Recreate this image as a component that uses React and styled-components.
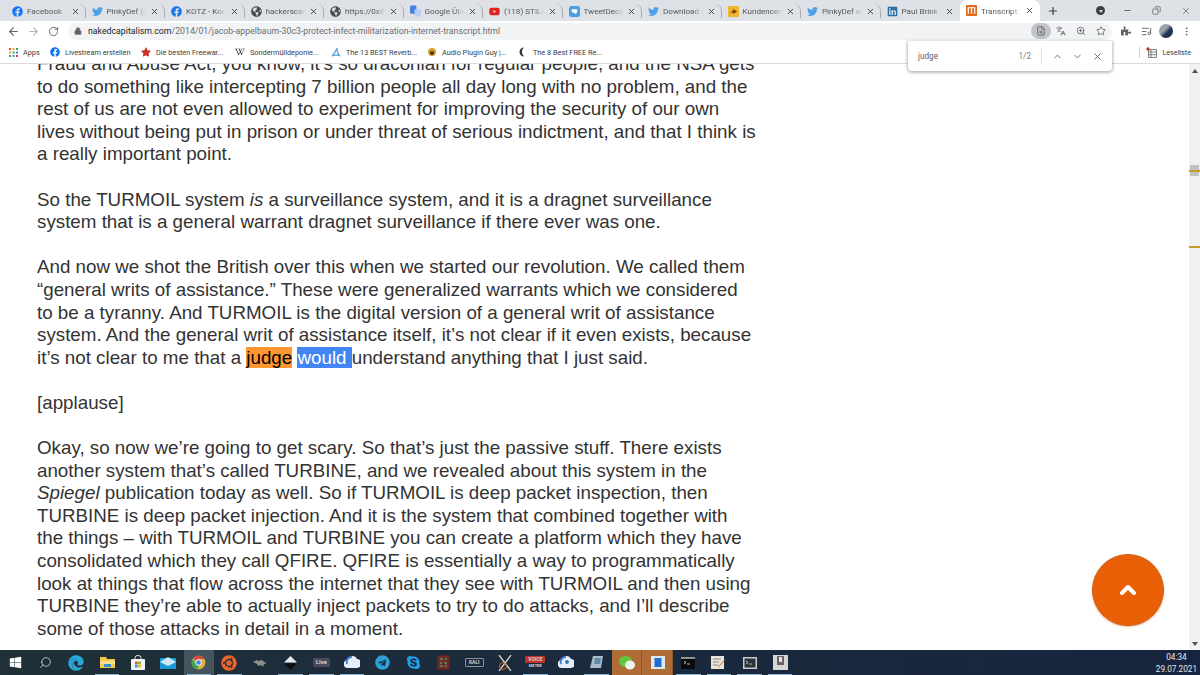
import React from "react";
import styled, { createGlobalStyle } from "styled-components";
import { FaFacebook, FaTwitter, FaLinkedin, FaYoutube, FaWindows, FaUbuntu, FaTelegram, FaSkype, FaEdge, FaGlobeAmericas, FaStar, FaPuzzlePiece, FaWikipediaW } from "react-icons/fa";
import { ArrowLeft, ArrowRight, RotateCw, Lock, Search, ZoomIn, Star, X, Plus, Minus, ChevronUp, ChevronDown, ListMusic, EllipsisVertical, Copy, FileSearch, Languages } from "lucide-react";

const GlobalStyle = createGlobalStyle`
  html, body { margin: 0; padding: 0; }
  body { width: 1200px; height: 675px; overflow: hidden; background: #fff; font-family: Roboto, "Liberation Sans", sans-serif; }
`;

const Screen = styled.div`
  position: relative;
  display: flex;
  flex-direction: column;
  width: 1200px;
  height: 675px;
  overflow: hidden;
`;

const TabStrip = styled.div`
  display: flex;
  align-items: flex-end;
  height: 21px;
  padding-left: 6px;
  background: #dee1e6;
  color: #45484d;
`;

const Tab = styled.div`
  display: flex;
  align-items: center;
  box-sizing: border-box;
  width: 79.5px;
  height: ${(p) => (p.$active ? "21px" : "14px")};
  padding-left: 6px;
  background: ${(p) => (p.$active ? "#fff" : "transparent")};
  border-radius: 7px 7px 0 0;
  margin-bottom: ${(p) => (p.$active ? "0" : "3px")};
  border-right: 1px solid ${(p) => (p.$sep ? "#a9acb1" : "transparent")};
`;

const Favicon = styled.span`
  display: flex;
  align-items: center;
  justify-content: center;
  flex: none;
  width: 11px;
  height: 11px;
  margin-right: 4px;
  font-size: 11px;
  color: ${(p) => p.$color || "#5f6368"};
`;

const TabTitle = styled.span`
  flex: 1;
  overflow: hidden;
  white-space: nowrap;
  font-size: 8.1px;
  color: #55585e;
  mask-image: linear-gradient(to right, #000 75%, transparent 100%);
`;

const TabClose = styled.span`
  display: flex;
  flex: none;
  width: 9px;
  margin: 0 5px 0 4px;
  color: #2c2e31;
`;

const NewTab = styled.span`
  display: flex;
  margin-left: 7px;
  margin-bottom: 4px;
  color: #3c4043;
`;

const WindowButtons = styled.div`
  display: flex;
  align-items: center;
  margin-left: auto;
  height: 21px;
  color: #3c4043;
`;

const WindowButton = styled.span`
  display: flex;
  justify-content: center;
  width: 29px;
`;

const ProfileDot = styled.span`
  display: flex;
  align-items: center;
  justify-content: center;
  width: 9px;
  height: 9px;
  margin-right: 8px;
  border-radius: 50%;
  background: #3c4043;
  &::after { content: ""; border: 2px solid transparent; border-top: 3px solid #dee1e6; margin-top: 3px; }
`;

const Toolbar = styled.div`
  display: flex;
  align-items: center;
  height: 20px;
  padding: 0 4px 0 3px;
  background: #fff;
  color: #5f6368;
`;

const NavButton = styled.span`
  display: flex;
  justify-content: center;
  flex: none;
  width: 20px;
  color: ${(p) => (p.$off ? "#b4b7bb" : "#5f6368")};
`;

const Omnibox = styled.div`
  display: flex;
  align-items: center;
  flex: none;
  box-sizing: border-box;
  width: 1044px;
  height: 17px;
  margin: 0 4px 0 5px;
  padding: 0 1px 0 6px;
  border-radius: 9px;
  background: #f1f3f4;
`;

const Url = styled.span`
  flex: 1;
  margin-left: 6px;
  font-size: 8.75px;
  white-space: nowrap;
  color: #6b6e73;
  & b { font-weight: 400; color: #25272a; }
`;

const OmniIcon = styled.span`
  display: flex;
  align-items: center;
  justify-content: center;
  flex: none;
  width: 20px;
  height: 16px;
  border-radius: 8px;
  background: ${(p) => (p.$on ? "#c2c4c7" : "transparent")};
  color: #5f6368;
`;

const ToolIcon = styled.span`
  display: flex;
  justify-content: center;
  flex: none;
  width: 20px;
  color: #5f6368;
`;

const Avatar = styled.span`
  display: block;
  width: 14px;
  height: 14px;
  border-radius: 50%;
  background: linear-gradient(135deg, #9aa3ad 0 40%, #20344f 60% 100%);
`;

const BookmarkBar = styled.div`
  display: flex;
  align-items: center;
  box-sizing: border-box;
  height: 23px;
  padding-left: 8px;
  background: #fff;
  border-bottom: 1px solid #dcdcdc;
`;

const Bookmark = styled.span`
  display: flex;
  align-items: center;
  gap: 5px;
  flex: none;
  width: ${(p) => p.$w}px;
  font-size: 7.3px;
  white-space: nowrap;
  color: #3c4043;
`;

const BookmarkIcon = styled.span`
  display: flex;
  align-items: center;
  justify-content: center;
  flex: none;
  width: 10px;
  height: 10px;
  font-size: 10px;
  color: ${(p) => p.$color || "#333"};
`;

const ReadingList = styled.span`
  display: flex;
  align-items: center;
  gap: 5px;
  margin-left: auto;
  padding-left: 6px;
  margin-right: 9px;
  font-size: 7.2px;
  color: #3c4043;
  border-left: 1px solid #d0d0d0;
`;

const FindBar = styled.div`
  position: absolute;
  top: 41px;
  left: 908px;
  display: flex;
  align-items: center;
  box-sizing: border-box;
  width: 204px;
  height: 30px;
  padding: 0 5px 0 10px;
  background: #fff;
  border-radius: 0 0 4px 4px;
  box-shadow: 0 1px 3px 1px rgba(60, 64, 67, 0.35);
  z-index: 3;
`;

const FindQuery = styled.span`
  flex: 1;
  font-size: 8.2px;
  color: #5a5d61;
`;

const FindCount = styled.span`
  font-size: 8.2px;
  color: #7b7e83;
  padding-right: 10px;
  margin-right: 5px;
  border-right: 1px solid #e0e0e0;
  line-height: 18px;
`;

const FindButton = styled.span`
  display: flex;
  justify-content: center;
  width: 20px;
  color: #5f6368;
`;

const Viewport = styled.div`
  display: flex;
  flex: 1;
  min-height: 0;
  overflow: hidden;
`;

const Page = styled.main`
  flex: 1;
  overflow: hidden;
  padding-left: 37px;
  background: #fff;
`;

const Article = styled.article`
  width: 720px;
  margin-top: -11px;
  font-family: "Liberation Sans", Arial, sans-serif;
  font-size: 18.77px;
  line-height: 22.6px;
  color: #333;
`;

const Para = styled.p`
  margin: 0 0 22.6px;
`;

const Hit = styled.span`
  background: ${(p) => (p.$current ? "#ff9632" : "#4285f4")};
  color: ${(p) => (p.$current ? "#000" : "#fff")};
`;

const Scrollbar = styled.aside`
  position: relative;
  flex: none;
  width: 11px;
  background: #f1f1f1;
  &::before {
    content: "";
    position: absolute;
    top: 5px;
    left: 3px;
    border: 3px solid transparent;
    border-top: 0;
    border-bottom: 4px solid #505050;
  }
  &::after {
    content: "";
    position: absolute;
    bottom: 4px;
    left: 3px;
    border: 3px solid transparent;
    border-bottom: 0;
    border-top: 4px solid #505050;
  }
`;

const ScrollThumb = styled.span`
  position: absolute;
  top: 101px;
  left: 1px;
  width: 9px;
  height: 11px;
  background: #c1c1c1;
`;

const ScrollMark = styled.span`
  position: absolute;
  top: ${(p) => p.$top}px;
  left: 0;
  width: 11px;
  height: 2px;
  background: #c89a2a;
`;

const TopButton = styled.button`
  position: absolute;
  left: 1092px;
  top: 554px;
  display: flex;
  align-items: center;
  justify-content: center;
  width: 72px;
  height: 72px;
  padding: 0;
  border: 1px solid #c9641e;
  border-radius: 50%;
  background: #e85f06;
  box-shadow: 0 1px 2px rgba(230, 100, 20, 0.5);
  color: #fff;
  z-index: 2;
`;

const Taskbar = styled.footer`
  display: flex;
  align-items: stretch;
  flex: none;
  height: 25px;
  background: linear-gradient(to right, #1f3038, #1c2b3c 40%, #17243f);
`;

const TaskItem = styled.span`
  position: relative;
  display: flex;
  align-items: center;
  justify-content: center;
  flex: none;
  width: 30.6px;
  background: ${(p) => (p.$bg === "active" ? "#45555f" : p.$bg === "alert" ? "#b06c35" : "transparent")};
  box-shadow: ${(p) => (p.$bg === "alert" ? "inset -1px 0 0 #8a5a2f" : "none")};
  &::after {
    content: "";
    display: ${(p) => (p.$open ? "block" : "none")};
    position: absolute;
    left: 3px;
    right: 3px;
    bottom: 0;
    height: 1px;
    background: #8fb4cf;
  }
`;

const TaskLabel = styled.span`
  display: block;
  padding: 1px 3px;
  border-radius: 1px;
  font-size: ${(p) => p.$size || 6}px;
  line-height: 1.1;
  font-weight: 600;
  text-align: center;
  color: #d9dde0;
  background: ${(p) => p.$bg || "transparent"};
  border: ${(p) => (p.$outline ? "1px solid #8a9298" : "none")};
`;

const Clock = styled.time`
  display: flex;
  flex-direction: column;
  align-items: center;
  justify-content: center;
  margin-left: auto;
  padding-right: 3px;
  font-size: 8.2px;
  line-height: 12px;
  color: #e6e8ea;
`;

const chromeLogo = (
  <svg width="15" height="15" viewBox="0 0 24 24">
    <circle cx="12" cy="12" r="11" fill="#e2b33a" />
    <path d="M12 1a11 11 0 0 1 9.500 5.500H12a5.500 5.500 0 0 0-5 3L3.600 4.800A11 11 0 0 1 12 1z" fill="#d9483b" />
    <path d="M2.900 6l5 8.700a5.500 5.500 0 0 0 5 2.800L9.800 22.800A11 11 0 0 1 2.900 6z" fill="#3aa757" />
    <circle cx="12" cy="12" r="4.500" fill="#4a86e8" stroke="#fff" strokeWidth="1.500" />
  </svg>
);

const tabs = [
  { title: "Facebook", icon: <FaFacebook />, color: "#1877f2" },
  { title: "PinkyDef (@PinkyDef)", icon: <FaTwitter />, color: "#4da1e8" },
  { title: "KOTZ - Kontakt", icon: <FaFacebook />, color: "#1877f2" },
  { title: "hackerscard", icon: <FaGlobeAmericas />, color: "#4a4d52" },
  { title: "https://0x8...", icon: <FaGlobeAmericas />, color: "#4a4d52" },
  {
    title: "Google Übersetzer",
    icon: (
      <svg width="12" height="12" viewBox="0 0 12 12">
        <rect x="0" y="0" width="7" height="9" rx="1" fill="#4a7fe0" />
        <rect x="5" y="4" width="7" height="8" rx="1" fill="#b9cdf2" />
      </svg>
    ),
  },
  { title: "(118) STILL AL", icon: <FaYoutube />, color: "#e0231b" },
  {
    title: "TweetDeck",
    icon: (
      <svg width="11" height="11" viewBox="0 0 12 12">
        <rect width="12" height="12" rx="2.500" fill="#4a9fe4" />
        <path d="M3 3.500h6v3.500l-3 2V7H3z" fill="#fff" />
      </svg>
    ),
  },
  { title: "Download a", icon: <FaTwitter />, color: "#4da1e8" },
  {
    title: "Kundencenter",
    icon: (
      <svg width="11" height="11" viewBox="0 0 12 12">
        <rect width="12" height="12" rx="1" fill="#efb52c" />
        <path d="M2 7l4-2-1-2 5 3-5 3 1-2z" fill="#6b3b12" />
      </svg>
    ),
  },
  { title: "PinkyDef on", icon: <FaTwitter />, color: "#4da1e8" },
  { title: "Paul Brink |", icon: <FaLinkedin />, color: "#2a6ea8" },
  {
    title: "Transcript: Jacob",
    active: true,
    icon: (
      <svg width="11" height="11" viewBox="0 0 12 12">
        <rect width="12" height="12" rx="1" fill="#dd6b1f" />
        <path d="M2.500 9.500V3h7v6.500M6 3v6.500" fill="none" stroke="#fff" strokeWidth="1.300" />
      </svg>
    ),
  },
];

const bookmarks = [
  {
    w: 42,
    label: "Apps",
    icon: (
      <svg width="9" height="9" viewBox="0 0 9 9">
        {[0, 3.5, 7].map((y, r) =>
          [0, 3.5, 7].map((x, c) => (
            <rect key={`${r}${c}`} x={x} y={y} width="2" height="2" fill={["#d9483b", "#e2a52c", "#3aa757", "#4a7fe0"][(r + c) % 4]} />
          ))
        )}
      </svg>
    ),
  },
  { w: 91, label: "Livestream erstellen", icon: <FaFacebook />, color: "#1877f2" },
  { w: 94, label: "Die besten Freewar...", icon: <FaStar />, color: "#c9322b" },
  { w: 96, label: "Sondermülldeponie...", icon: <FaWikipediaW />, color: "#222" },
  {
    w: 96,
    label: "The 13 BEST Reverb...",
    icon: (
      <svg width="10" height="10" viewBox="0 0 10 10">
        <path d="M1 9C3 7 5 4 6 1c0 3 1 6 3 8-2-1-5-1-8 0z" fill="none" stroke="#5aa7d8" strokeWidth="1.200" />
      </svg>
    ),
  },
  {
    w: 91,
    label: "Audio Plugin Guy |...",
    icon: (
      <svg width="10" height="10" viewBox="0 0 10 10">
        <circle cx="5" cy="5" r="4" fill="#d6a02a" />
        <circle cx="5" cy="6" r="2" fill="#4b3416" />
      </svg>
    ),
  },
  {
    w: 90,
    label: "The 8 Best FREE Re...",
    icon: (
      <svg width="10" height="10" viewBox="0 0 10 10">
        <path d="M6 0.500a4.500 4.500 0 0 0 0 9 6 6 0 0 1 0-9z" fill="#333" />
      </svg>
    ),
  },
];

const ReadingIcon = () => (
  <svg width="11" height="11" viewBox="0 0 11 11">
    <path d="M2.500 2.500h8v8h-8zM2.500 5h8M2.500 7.700h8M5 2.500v8" fill="none" stroke="#5f6368" strokeWidth="0.800" />
    <circle cx="2" cy="2" r="1.700" fill="#d93025" />
  </svg>
);

const Folder = () => (
  <svg width="15" height="13" viewBox="0 0 15 13">
    <path d="M0 1h6l1 2h8v9H0z" fill="#f2c94c" />
    <rect y="5" width="15" height="3" fill="#f8e08e" />
    <rect x="4" y="8" width="7" height="3" fill="#3b8bd0" />
  </svg>
);

const StoreBag = () => (
  <svg width="14" height="15" viewBox="0 0 14 15">
    <path d="M4 4V2.500a3 2 0 0 1 6 0V4" fill="none" stroke="#dfe3e6" />
    <rect y="4" width="14" height="11" rx="1" fill="#f3f4f5" />
    <rect x="4" y="6.500" width="2.800" height="2.800" fill="#e55b2c" />
    <rect x="7.200" y="6.500" width="2.800" height="2.800" fill="#7db93c" />
    <rect x="4" y="9.700" width="2.800" height="2.800" fill="#2f9fe0" />
    <rect x="7.200" y="9.700" width="2.800" height="2.800" fill="#f3b81f" />
  </svg>
);

const Mail = () => (
  <svg width="16" height="12" viewBox="0 0 16 12">
    <rect y="1" width="16" height="11" fill="#1b9ad6" />
    <path d="M0 5l8-5 8 5-8 4z" fill="#cfeaf7" />
  </svg>
);

const Ghost = () => (
  <svg width="14" height="8" viewBox="0 0 14 8">
    <path d="M0 3l4-2 1 1 4-1 2 2 3 1-3 1-1 3-2-2-3 1-1-2z" fill="#8d9088" />
  </svg>
);

const Diamond = () => (
  <svg width="13" height="14" viewBox="0 0 13 14">
    <path d="M6.500 0l6.500 6.500H0z" fill="#e8eaec" />
    <path d="M0 7.500h13L6.500 14z" fill="#0c0f12" />
  </svg>
);

const Cloud = ({ mark }) => (
  <svg width="16" height="15" viewBox="0 0 16 15">
    <path d="M4 13a4 4 0 0 1-.5-8 5 5 0 0 1 9.500-1 4.500 4.500 0 0 1 0 9z" fill="#e6eef8" />
    <path d="M3 9a5 5 0 0 1 5-7" fill="none" stroke="#3d7fd0" strokeWidth="2" />
    {mark && <circle cx="9" cy="7" r="2" fill="#3a7ab8" />}
  </svg>
);

const Rack = () => (
  <svg width="13" height="15" viewBox="0 0 13 15">
    <rect width="13" height="15" fill="#6e2a28" stroke="#3c1c1c" />
    <path d="M3 4h3M8 4h2M3 8h2M7 8h3M3 11h3M8 11h2" stroke="#57c06b" strokeWidth="1.200" />
  </svg>
);

const Cross = () => (
  <svg width="16" height="16" viewBox="0 0 16 16">
    <path d="M2 0l12 16M14 0L2 16" stroke="#d8d8d0" strokeWidth="1.300" />
    <circle cx="6" cy="11" r="3.500" fill="none" stroke="#c8662a" />
  </svg>
);

const Book = () => (
  <svg width="14" height="15" viewBox="0 0 14 15">
    <path d="M3 1h10l-2 12H0z" fill="#a9bcc9" />
    <path d="M5 3h6l-1 6H4z" fill="#5f8ba8" />
  </svg>
);

const WeChat = () => (
  <svg width="16" height="14" viewBox="0 0 16 14">
    <ellipse cx="6.500" cy="5.500" rx="6.500" ry="5.500" fill="#5fc63d" />
    <ellipse cx="11" cy="9" rx="5" ry="4.500" fill="#eef3ea" />
  </svg>
);

const BlueWindow = () => (
  <svg width="14" height="13" viewBox="0 0 14 13">
    <rect width="14" height="13" fill="#dfe8f2" />
    <rect x="3.500" y="2" width="7" height="9" fill="#1f6fd0" />
  </svg>
);

const Shell = ({ light }) => (
  <svg width="14" height="12" viewBox="0 0 14 12">
    <rect width="14" height="12" fill={light ? "#c8ccce" : "#0a0a0a"} />
    <rect x={light ? 1.500 : 0} y={light ? 1.500 : 0} width={light ? 11 : 14} height={light ? 9 : 2} fill={light ? "#2b3338" : "#8d9499"} />
    <path d="M3 4l2 1.500L3 7M6 7h3" fill="none" stroke="#e6e6e6" strokeWidth="0.800" />
  </svg>
);

const Notes = () => (
  <svg width="15" height="13" viewBox="0 0 15 13">
    <rect width="13" height="13" fill="#e8e4da" />
    <path d="M2 3h8M2 6h6M2 9h5" stroke="#8a8a80" />
    <path d="M14 4l-6 7-1 1 .5-2 6-6.500z" fill="#d9772a" />
  </svg>
);

const Archive = () => (
  <svg width="15" height="15" viewBox="0 0 15 15">
    <rect width="15" height="15" fill="#d8d6d4" />
    <rect x="4" y="1" width="7" height="9" fill="#6c5f62" />
    <rect x="6" y="2" width="3" height="5" fill="#e3dfdc" />
  </svg>
);

const tasks = [
  { el: <FaWindows size={13} color="#fff" /> },
  { el: <Search size={13} color="#d5dbe0" strokeWidth={1.5} style={{ transform: "scaleX(-1)" }} /> },
  { el: <FaEdge size={16} color="#2ba5d8" /> },
  { el: <Folder />, open: true },
  { el: <StoreBag /> },
  { el: <Mail /> },
  { el: chromeLogo, bg: "active", open: true },
  { el: <FaUbuntu size={16} color="#e9642c" />, open: true },
  { el: <Ghost /> },
  { el: <Diamond />, open: true },
  { el: <TaskLabel $bg="#4a4a57">Live</TaskLabel>, open: true },
  { el: <Cloud />, open: true },
  { el: <FaTelegram size={15} color="#2f9fd8" /> },
  { el: <FaSkype size={15} color="#1da1e8" /> },
  { el: <Rack /> },
  { el: <TaskLabel $size={5} $outline>KALI</TaskLabel> },
  { el: <Cross /> },
  {
    el: (
      <div>
        <TaskLabel $size={5} $bg="#c0322b">VOICE</TaskLabel>
        <TaskLabel $size={4}>METER</TaskLabel>
      </div>
    ),
    open: true,
  },
  { el: <Cloud mark /> },
  { el: <Book />, open: true },
  { el: <WeChat />, bg: "alert" },
  { el: <BlueWindow />, bg: "alert" },
  { el: <Shell />, open: true },
  { el: <Notes />, open: true },
  { el: <Shell light />, open: true },
  { el: <Archive />, open: true },
];

export default function App() {
  return (
    <Screen>
      <GlobalStyle />
      <TabStrip>
        {tabs.map((t, i) => (
          <Tab key={i} $active={t.active} $sep={!t.active && i < tabs.length - 2}>
            <Favicon $color={t.color}>{t.icon}</Favicon>
            <TabTitle>{t.title}</TabTitle>
            <TabClose><X size={9} strokeWidth={2.2} /></TabClose>
          </Tab>
        ))}
        <NewTab><Plus size={12} strokeWidth={2.4} /></NewTab>
        <WindowButtons>
          <ProfileDot />
          <WindowButton><Minus size={9} /></WindowButton>
          <WindowButton><Copy size={9} strokeWidth={1.6} style={{ transform: "scaleX(-1)" }} /></WindowButton>
          <WindowButton><X size={10} strokeWidth={1.4} /></WindowButton>
        </WindowButtons>
      </TabStrip>

      <Toolbar>
        <NavButton><ArrowLeft size={13} /></NavButton>
        <NavButton $off><ArrowRight size={13} /></NavButton>
        <NavButton><RotateCw size={11} /></NavButton>
        <Omnibox>
          <Lock size={8} fill="#5f6368" color="#5f6368" />
          <Url><b>nakedcapitalism.com</b>/2014/01/jacob-appelbaum-30c3-protect-infect-militarization-internet-transcript.html</Url>
          <OmniIcon $on><FileSearch size={10} /></OmniIcon>
          <OmniIcon><Languages size={10} /></OmniIcon>
          <OmniIcon><ZoomIn size={10} /></OmniIcon>
          <OmniIcon><Star size={10} /></OmniIcon>
        </Omnibox>
        <ToolIcon><FaPuzzlePiece size={10} /></ToolIcon>
        <ToolIcon><ListMusic size={11} /></ToolIcon>
        <ToolIcon><Avatar /></ToolIcon>
        <ToolIcon><EllipsisVertical size={11} /></ToolIcon>
      </Toolbar>

      <BookmarkBar>
        {bookmarks.map((b) => (
          <Bookmark key={b.label} $w={b.w}>
            <BookmarkIcon $color={b.color}>{b.icon}</BookmarkIcon>
            {b.label}
          </Bookmark>
        ))}
        <ReadingList>
          <ReadingIcon />
          Leseliste
        </ReadingList>
      </BookmarkBar>

      <FindBar>
        <FindQuery>judge</FindQuery>
        <FindCount>1/2</FindCount>
        <FindButton><ChevronUp size={11} /></FindButton>
        <FindButton><ChevronDown size={11} /></FindButton>
        <FindButton><X size={11} /></FindButton>
      </FindBar>

      <Viewport>
        <Page>
          <Article>
            <Para>
              Fraud and Abuse Act, you know, it’s so draconian for regular people, and the NSA gets to do something like intercepting 7 billion people all day long with no problem, and the rest of us are not even allowed to experiment for improving the security of our own lives without being put in prison or under threat of serious indictment, and that I think is a really important point.
            </Para>
            <Para>
              So the TURMOIL system <em>is</em> a surveillance system, and it is a dragnet surveillance system that is a general warrant dragnet surveillance if there ever was one.
            </Para>
            <Para>
              And now we shot the British over this when we started our revolution. We called them “general writs of assistance.” These were generalized warrants which we considered to be a tyranny. And TURMOIL is the digital version of a general writ of assistance system. And the general writ of assistance itself, it’s not clear if it even exists, because it’s not clear to me that a <Hit $current>judge</Hit> <Hit>would </Hit>understand anything that I just said.
            </Para>
            <Para>[applause]</Para>
            <Para>
              Okay, so now we’re going to get scary. So that’s just the passive stuff. There exists another system that’s called TURBINE, and we revealed about this system in the <em>Spiegel</em> publication today as well. So if TURMOIL is deep packet inspection, then TURBINE is deep packet injection. And it is the system that combined together with the things – with TURMOIL and TURBINE you can create a platform which they have consolidated which they call QFIRE. QFIRE is essentially a way to programmatically look at things that flow across the internet that they see with TURMOIL and then using TURBINE they’re able to actually inject packets to try to do attacks, and I’ll describe some of those attacks in detail in a moment.
            </Para>
          </Article>
        </Page>
        <Scrollbar>
          <ScrollThumb />
          <ScrollMark $top={106} />
          <ScrollMark $top={182} />
        </Scrollbar>
      </Viewport>

      <TopButton aria-label="Back to top">
        <ChevronUp size={24} strokeWidth={4} />
      </TopButton>

      <Taskbar>
        {tasks.map((t, i) => (
          <TaskItem key={i} $bg={t.bg} $open={t.open}>{t.el}</TaskItem>
        ))}
        <Clock>
          <span>04:34</span>
          <span>29.07.2021</span>
        </Clock>
      </Taskbar>
    </Screen>
  );
}
